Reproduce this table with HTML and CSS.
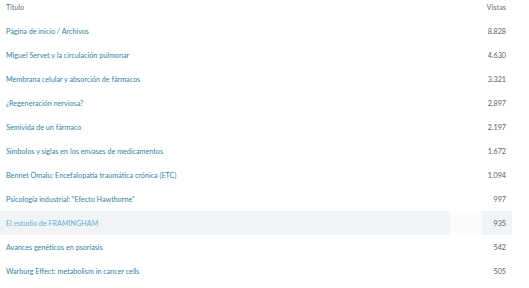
FILE: index.html
```html
<!DOCTYPE html>
<html lang="es">
<head>
<meta charset="utf-8">
<link rel="stylesheet" href="styles.css">
</head>
<body>
<div class="table">
  <div class="row head"><div class="c title">Título</div><div class="c gap"></div><div class="c num">Vistas</div></div>
  <div class="row"><div class="c title">Página de inicio / Archivos</div><div class="c gap"></div><div class="c num">8.828</div></div>
  <div class="row"><div class="c title">Miguel Servet y la circulación pulmonar</div><div class="c gap"></div><div class="c num">4.630</div></div>
  <div class="row"><div class="c title">Membrana celular y absorción de fármacos</div><div class="c gap"></div><div class="c num">3.321</div></div>
  <div class="row"><div class="c title">¿Regeneración nerviosa?</div><div class="c gap"></div><div class="c num">2.897</div></div>
  <div class="row"><div class="c title">Semivida de un fármaco</div><div class="c gap"></div><div class="c num">2.197</div></div>
  <div class="row"><div class="c title">Símbolos y siglas en los envases de medicamentos</div><div class="c gap"></div><div class="c num">1.672</div></div>
  <div class="row"><div class="c title">Bennet Omalu: Encefalopatía traumática crónica (ETC)</div><div class="c gap"></div><div class="c num">1.094</div></div>
  <div class="row"><div class="c title">Psicología industrial: “Efecto Hawthorne”</div><div class="c gap"></div><div class="c num">997</div></div>
  <div class="row hover"><div class="c title">El estudio de FRAMINGHAM</div><div class="c gap"></div><div class="c num">935</div></div>
  <div class="row"><div class="c title">Avances genéticos en psoriasis</div><div class="c gap"></div><div class="c num">542</div></div>
  <div class="row"><div class="c title">Warburg Effect: metabolism in cancer cells</div><div class="c gap"></div><div class="c num">505</div></div>
</div>
</body>
</html>
```
FILE: styles.css
```css
html, body {
  margin: 0;
  padding: 0;
  background: #ffffff;
}
body {
  font-family: Lato, "Open Sans", sans-serif;
  font-size: 7.2px;
}
.table {
  width: 512px;
  display: flex;
  flex-direction: column;
}
.row {
  display: grid;
  grid-template-columns: 450px 32px 30px;
  height: 24px;
  align-items: stretch;
}
.row.head {
  height: 19px;
}
.c {
  display: flex;
  align-items: center;
  white-space: nowrap;
}
.title {
  padding-left: 6px;
  color: #3483a1;
}
.num {
  justify-content: flex-end;
  padding-right: 6px;
  color: #5a6066;
}
.head .c {
  align-items: flex-start;
  padding-top: 3px;
}
.head .title {
  color: #5d7080;
}
.head .num {
  color: #8494a3;
  font-weight: 700;
}
.hover .title,
.hover .num {
  background: #f1f4f7;
}
.hover .title {
  color: #5fb2d2;
}
.hover .gap {
  background: #fbfcfd;
}
```
